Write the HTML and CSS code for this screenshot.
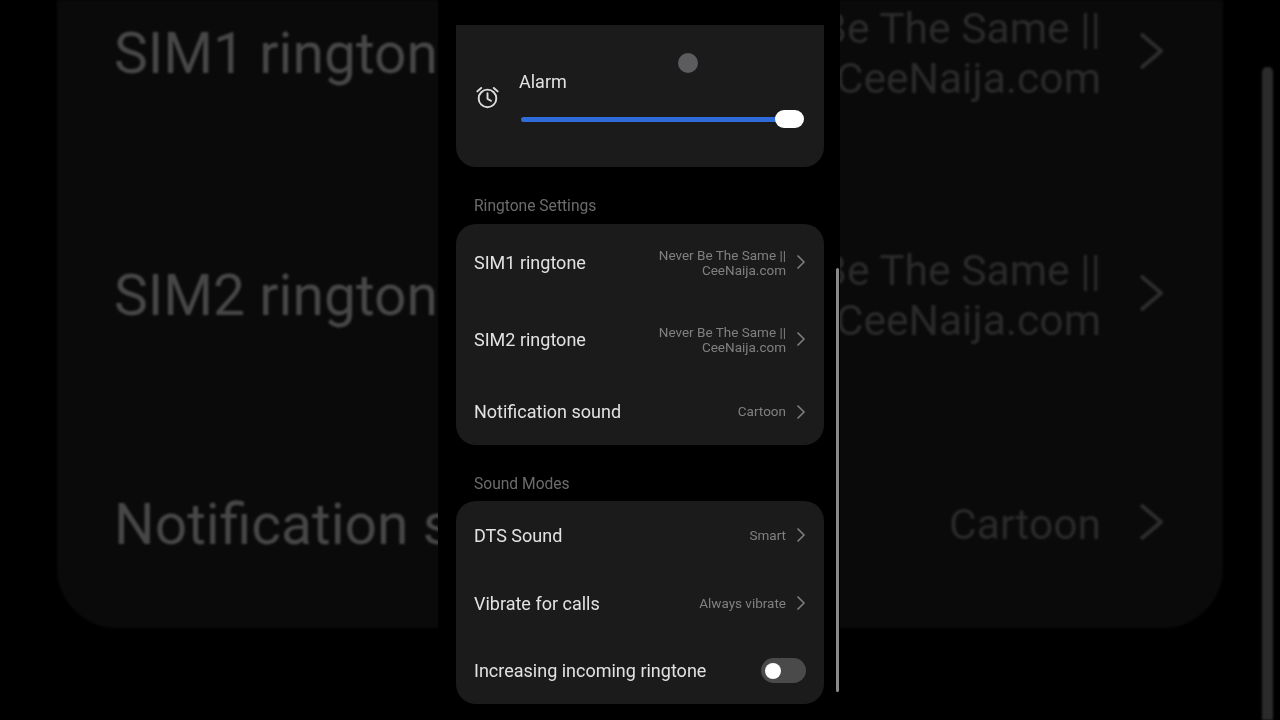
FILE: index.html
```html
<!DOCTYPE html>
<html lang="en">
<head>
<meta charset="utf-8">
<title>Sound settings</title>
<link rel="stylesheet" href="styles.css">
</head>
<body>
<div class="stage">
  <div class="backdrop">
    <div class="bg-card">
      <div class="bg-row bg-row-first">
        <span class="bg-title">SIM1 ringtone</span>
        <span class="bg-value">Never Be The Same ||<br>CeeNaija.com</span>
        <svg class="bg-chevron" viewBox="0 0 24 36"><path d="M2 1l20 17L2 35"/></svg>
      </div>
      <div class="bg-row bg-row-second">
        <span class="bg-title">SIM2 ringtone</span>
        <span class="bg-value">Never Be The Same ||<br>CeeNaija.com</span>
        <svg class="bg-chevron" viewBox="0 0 24 36"><path d="M2 1l20 17L2 35"/></svg>
      </div>
      <div class="bg-row bg-row-third">
        <span class="bg-title">Notification sound</span>
        <span class="bg-value">Cartoon</span>
        <svg class="bg-chevron" viewBox="0 0 24 36"><path d="M2 1l20 17L2 35"/></svg>
      </div>
    </div>
    <div class="bg-scrollbar"></div>
  </div>

  <main class="phone">
    <section class="card card-volume">
      <svg class="alarm-icon" viewBox="0 0 24 24">
        <circle cx="12" cy="13" r="9.2"/>
        <path d="M12 7.6V13.4L15.6 15.4"/>
        <path d="M1.4 5.6L5.4 2M22.6 5.6L18.6 2"/>
      </svg>
      <div class="volume-body">
        <div class="volume-label">Alarm</div>
        <div class="slider"><div class="slider-fill"></div><div class="slider-thumb"></div></div>
      </div>
    </section>

    <h2 class="section-label section-label-ringtone">Ringtone Settings</h2>
    <section class="card">
      <div class="row row-tall">
        <span class="row-title">SIM1 ringtone</span>
        <span class="row-value">Never Be The Same ||<br>CeeNaija.com</span>
        <svg class="chevron" viewBox="0 0 10 16"><path d="M1.5 1.5l6.5 6.5-6.5 6.5"/></svg>
      </div>
      <div class="row row-tall">
        <span class="row-title">SIM2 ringtone</span>
        <span class="row-value">Never Be The Same ||<br>CeeNaija.com</span>
        <svg class="chevron" viewBox="0 0 10 16"><path d="M1.5 1.5l6.5 6.5-6.5 6.5"/></svg>
      </div>
      <div class="row row-short">
        <span class="row-title">Notification sound</span>
        <span class="row-value">Cartoon</span>
        <svg class="chevron" viewBox="0 0 10 16"><path d="M1.5 1.5l6.5 6.5-6.5 6.5"/></svg>
      </div>
    </section>

    <h2 class="section-label section-label-modes">Sound Modes</h2>
    <section class="card">
      <div class="row row-mode">
        <span class="row-title">DTS Sound</span>
        <span class="row-value">Smart</span>
        <svg class="chevron" viewBox="0 0 10 16"><path d="M1.5 1.5l6.5 6.5-6.5 6.5"/></svg>
      </div>
      <div class="row row-mode">
        <span class="row-title">Vibrate for calls</span>
        <span class="row-value">Always vibrate</span>
        <svg class="chevron" viewBox="0 0 10 16"><path d="M1.5 1.5l6.5 6.5-6.5 6.5"/></svg>
      </div>
      <div class="row row-mode">
        <span class="row-title">Increasing incoming ringtone</span>
        <span class="toggle"><span class="toggle-knob"></span></span>
      </div>
    </section>

    <div class="touch-dot"></div>
    <div class="phone-scrollbar"></div>
  </main>
</div>
</body>
</html>
```

FILE: styles.css
```css
* { box-sizing: border-box; }

html, body {
  margin: 0;
  height: 100%;
  background: #000;
}

.stage {
  position: relative;
  width: 1280px;
  height: 720px;
  overflow: hidden;
  background: #000;
  font-family: Roboto, "Liberation Sans", sans-serif;
}

/* Enlarged, dimmed copy of the page behind the phone */
.backdrop {
  display: flex;
  height: 720px;
  padding-left: 57px;
  filter: blur(0.9px);
}

.bg-card {
  width: 1166px;
  height: 628px;
  background: #0a0a0a;
  border-radius: 0 0 60px 60px;
  overflow: hidden;
  padding: 0 60px 0 57px;
}

.bg-row {
  display: flex;
  align-items: center;
}

.bg-row-first { height: 174px; padding-bottom: 68px; }
.bg-row-second { height: 243px; }
.bg-row-third { height: 211px; padding-top: 3px; }

.bg-title {
  flex: 1;
  font-size: 57px;
  color: #474747;
  white-space: nowrap;
}

.bg-value {
  margin: -1px 0 0 0;
  font-size: 42.6px;
  line-height: 50px;
  color: #2a2a2a;
  text-align: right;
  white-space: nowrap;
}

.bg-chevron {
  flex: none;
  width: 24px;
  height: 36px;
  margin: -5px 0 0 38px;
  fill: none;
  stroke: #2d2d2d;
  stroke-width: 4;
}

.bg-scrollbar {
  width: 11px;
  height: 653px;
  margin: 67px 0 0 39px;
  background: #2b2b2b;
  border-radius: 5px 5px 0 0;
}

/* Foreground phone screen */
.phone {
  position: absolute;
  top: 0;
  left: 438px;
  width: 402px;
  height: 720px;
  padding: 25px 16px 0 18px;
  background: #000;
  filter: blur(0.35px);
}

.card {
  background: #1b1b1b;
  border-radius: 20px;
}

.card-volume {
  display: flex;
  align-items: center;
  height: 142px;
  padding: 0 20px 0 20px;
  border-radius: 0 0 20px 20px;
}

.alarm-icon {
  flex: none;
  width: 23px;
  height: 23px;
  margin: 2px 20px 0 0;
  fill: none;
  stroke: #dcdcdc;
  stroke-width: 2;
  stroke-linecap: round;
  stroke-linejoin: round;
}

.volume-body {
  flex: 1;
  margin-top: 7px;
}

.volume-label {
  font-size: 18px;
  line-height: 22px;
  color: #e2e2e2;
}

.slider {
  position: relative;
  height: 18px;
  margin: 17px 0 0 2px;
}

.slider-fill {
  position: absolute;
  top: 6.5px;
  left: 0;
  right: 14px;
  height: 5px;
  background: #2f6cd9;
  border-radius: 3px;
}

.slider-thumb {
  position: absolute;
  top: 0;
  right: 0;
  width: 29px;
  height: 18px;
  background: #fff;
  border-radius: 9px;
}

.section-label {
  margin: 0;
  padding-left: 18px;
  font-size: 15.6px;
  font-weight: 400;
  line-height: 20px;
  color: #6c6c6c;
}

.section-label-ringtone { padding-top: 29px; height: 57px; }
.section-label-modes { padding-top: 29px; height: 56px; }

.row {
  display: flex;
  align-items: center;
  padding: 0 18px;
}

.row-tall { height: 77px; }
.row-tall .chevron { margin-top: -2px; }
.row-short { height: 67px; }
.row-mode { height: 68px; }
.row-mode:last-child { height: 67px; }

.row-title {
  flex: 1;
  font-size: 18px;
  color: #e2e2e2;
  white-space: nowrap;
}

.row-value {
  padding-top: 1px;
  font-size: 13.5px;
  line-height: 15.5px;
  color: #808080;
  text-align: right;
  white-space: nowrap;
}

.chevron {
  flex: none;
  width: 10px;
  height: 16px;
  margin-left: 10px;
  fill: none;
  stroke: #808080;
  stroke-width: 1.5;
}

.toggle {
  flex: none;
  display: flex;
  align-items: center;
  width: 45px;
  height: 25px;
  padding-left: 4px;
  background: #4a4a4a;
  border-radius: 13px;
}

.toggle-knob {
  width: 16px;
  height: 16px;
  background: #fff;
  border-radius: 50%;
}

.touch-dot {
  position: absolute;
  top: 53px;
  left: 240px;
  width: 20px;
  height: 20px;
  background: #5c5c5e;
  border-radius: 50%;
}

.phone-scrollbar {
  position: absolute;
  top: 268px;
  left: 398px;
  width: 3px;
  height: 424px;
  background: #8a8a8a;
  border-radius: 2px;
}
```
